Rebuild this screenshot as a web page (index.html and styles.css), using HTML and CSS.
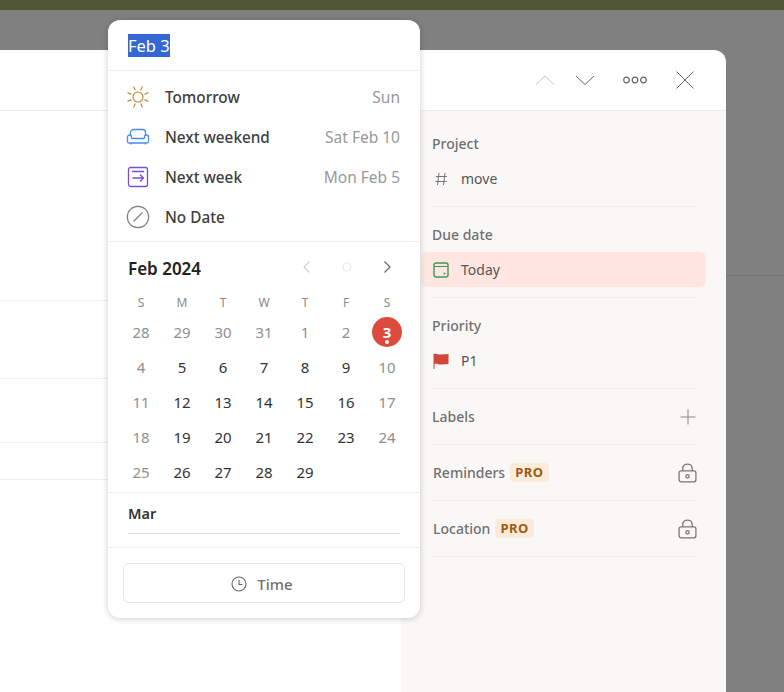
FILE: index.html
```html
<!DOCTYPE html>
<html lang="en">
<head>
    <meta charset="UTF-8">
    <meta name="viewport" content="width=device-width, initial-scale=1.0">
    <title>Task</title>
    <link rel="stylesheet" href="styles.css">
</head>
<body>
<div class="topbar"></div>
<div class="backdrop">
    <div class="modal">
        <div class="modal-head">
            <svg class="head-icon" width="22" height="22" viewBox="0 0 22 22"><path d="M2 15.500 11 7l9 8.500" stroke="#c4c4c4"/></svg>
            <svg class="head-icon" width="22" height="22" viewBox="0 0 22 22"><path d="M2 7l9 8.500L20 7" stroke="#666"/></svg>
            <svg class="head-icon dots" width="26" height="22" viewBox="0 0 26 22"><g stroke="#666" stroke-width="1.200"><circle cx="4.500" cy="11" r="2.800"/><circle cx="13" cy="11" r="2.800"/><circle cx="21.500" cy="11" r="2.800"/></g></svg>
            <svg class="head-icon" width="22" height="22" viewBox="0 0 22 22"><path d="M2.500 2.500l17 17M19.500 2.500l-17 17" stroke="#666"/></svg>
        </div>
        <div class="modal-body">
            <div class="main-pane">
                <div class="main-row row-a"></div>
                <div class="main-row row-b"></div>
                <div class="main-row row-c"></div>
                <div class="main-row row-d"></div>
            </div>
            <div class="side-pane">
                <div class="section">
                    <div class="section-label">Project</div>
                    <div class="section-value">
                        <svg class="value-icon" width="16" height="16" viewBox="0 0 16 16"><path d="M6 2 4.500 14M12 2l-1.500 12M3 5.500h11M2.500 10.500h11" stroke="#777" fill="none"/></svg>
                        <span>move</span>
                    </div>
                </div>
                <div class="section">
                    <div class="section-label">Due date</div>
                    <div class="section-value value-due">
                        <svg class="value-icon" width="16" height="16" viewBox="0 0 16 16"><rect x="1" y="1" width="14" height="14" rx="2" fill="none" stroke="#3d9a50" stroke-width="1.400"/><path d="M1.500 4.500h13" stroke="#3d9a50"/><circle cx="11.500" cy="11.500" r="1" fill="#3d9a50"/></svg>
                        <span>Today</span>
                    </div>
                </div>
                <div class="section">
                    <div class="section-label">Priority</div>
                    <div class="section-value">
                        <svg class="value-icon" width="16" height="16" viewBox="0 0 16 16"><path d="M0.500 1c3-1 5 .8 8 .5 2.500-.2 4.500-.5 7-.5v10c-2.500 0-4.500 .3-7 .5-3 .2-5-1.300-7-.5V16H.5z" fill="#d1453b"/></svg>
                        <span>P1</span>
                    </div>
                </div>
                <div class="section section-small">
                    <span class="section-label">Labels</span>
                    <svg class="end-icon" width="16" height="16" viewBox="0 0 16 16"><path d="M8 .5v15M.5 8h15" stroke="#888" fill="none"/></svg>
                </div>
                <div class="section section-small">
                    <span class="section-label label-pro">Reminders</span><span class="pro">PRO</span>
                    <svg class="end-icon lock" width="19" height="20" viewBox="0 0 18 19"><g fill="none" stroke="#777" stroke-width="1.200"><rect x="1" y="7.500" width="16" height="10.500" rx="2"/><path d="M4.500 7.500V5a4.500 4 0 0 1 9 0v2.500"/><circle cx="9" cy="12.700" r="1.600"/></g></svg>
                </div>
                <div class="section section-small">
                    <span class="section-label label-pro">Location</span><span class="pro">PRO</span>
                    <svg class="end-icon lock" width="19" height="20" viewBox="0 0 18 19"><g fill="none" stroke="#777" stroke-width="1.200"><rect x="1" y="7.500" width="16" height="10.500" rx="2"/><path d="M4.500 7.500V5a4.500 4 0 0 1 9 0v2.500"/><circle cx="9" cy="12.700" r="1.600"/></g></svg>
                </div>
            </div>
        </div>
    </div>
    <div class="behind"></div>
</div>

<div class="popup">
    <div class="popup-input"><span class="selected">Feb 3</span></div>
    <div class="quick-list">
        <div class="quick-item">
            <svg width="24" height="24" viewBox="0 0 24 24"><g stroke="#c67f2b" stroke-width="1.100" fill="none" stroke-linecap="round"><circle cx="12" cy="12" r="5"/><path d="M9.130 5.070 7.800 1.840M14.870 5.070 16.200 1.840M9.130 18.930 7.800 22.160M14.870 18.930 16.200 22.160M5.070 9.130 1.840 7.800M5.070 14.870 1.840 16.200M18.930 9.130 22.160 7.800M18.930 14.870 22.160 16.200"/></g></svg>
            <span class="quick-name">Tomorrow</span><span class="quick-date">Sun</span>
        </div>
        <div class="quick-item">
            <svg width="24" height="24" viewBox="0 0 24 24"><g stroke="#4a8cf0" stroke-width="1.300" fill="none" stroke-linejoin="round"><path d="M4.500 10V7.500a3 3 0 0 1 3-3h9a3 3 0 0 1 3 3V10"/><path d="M5.500 13.500h13M5.500 13.500V12a2 2 0 0 0-4 0v4.500a1.500 1.500 0 0 0 1.500 1.500h18a1.500 1.500 0 0 0 1.500-1.500V12a2 2 0 0 0-4 0v1.500"/><path d="M5 18v1.500M19 18v1.500"/></g></svg>
            <span class="quick-name">Next weekend</span><span class="quick-date">Sat Feb 10</span>
        </div>
        <div class="quick-item">
            <svg width="24" height="24" viewBox="0 0 24 24"><g stroke="#7b4fd4" stroke-width="1.300" fill="none"><rect x="2.500" y="2.500" width="19" height="19" rx="2"/><path d="M6 6.500h12M6.500 13h11M14 9.500l3.500 3.500-3.500 3.500"/></g></svg>
            <span class="quick-name">Next week</span><span class="quick-date">Mon Feb 5</span>
        </div>
        <div class="quick-item">
            <svg width="24" height="24" viewBox="0 0 24 24"><g stroke="#808080" stroke-width="1.200" fill="none"><circle cx="12" cy="12" r="10.700"/><path d="M7.500 16.500l9-9"/></g></svg>
            <span class="quick-name">No Date</span>
        </div>
    </div>
    <div class="calendar">
        <div class="cal-head">
            <span class="cal-title">Feb 2024</span>
            <div class="cal-nav">
                <svg width="12" height="14" viewBox="0 0 12 14"><path d="M8.500 1.500 3 7l5.500 5.500" fill="none" stroke="#d0d0d0" stroke-width="1.200"/></svg>
                <svg width="12" height="14" viewBox="0 0 12 14"><circle cx="6" cy="7" r="4" fill="none" stroke="#e8e8e8" stroke-width="1.200"/></svg>
                <svg width="12" height="14" viewBox="0 0 12 14"><path d="M3.500 1.500 9 7l-5.500 5.500" fill="none" stroke="#666" stroke-width="1.200"/></svg>
            </div>
        </div>
        <div class="cal-grid" id="calGrid"></div>
    </div>
    <div class="next-month">
        <div class="next-title">Mar</div>
    </div>
    <div class="popup-foot">
        <div class="time-btn">
            <svg width="16" height="16" viewBox="0 0 16 16"><g fill="none" stroke="#666" stroke-width="1.100"><circle cx="8" cy="8" r="7"/><path d="M8 4v4.500h3.500"/></g></svg>
            <span>Time</span>
        </div>
    </div>
</div>

<script>
    const weekDays = ['S', 'M', 'T', 'W', 'T', 'F', 'S'];
    const days = [28, 29, 30, 31, 1, 2, 3, 4, 5, 6, 7, 8, 9, 10, 11, 12, 13, 14, 15, 16, 17, 18, 19, 20, 21, 22, 23, 24, 25, 26, 27, 28, 29];
    const calGrid = document.getElementById('calGrid');

    weekDays.forEach(d => {
        const cell = document.createElement('div');
        cell.className = 'week-day';
        cell.textContent = d;
        calGrid.appendChild(cell);
    });

    days.forEach((d, i) => {
        const cell = document.createElement('div');
        cell.className = 'day';
        // past days and weekends are greyed out
        if (i < 6 || i % 7 === 0 || i % 7 === 6) cell.classList.add('muted');
        if (i === 6) {
            cell.className = 'day today';
            const mark = document.createElement('span');
            mark.className = 'today-mark';
            mark.textContent = d;
            cell.appendChild(mark);
        } else {
            cell.textContent = d;
        }
        calGrid.appendChild(cell);
    });
</script>
</body>
</html>
```

FILE: styles.css
```css
* {
    box-sizing: border-box;
}
body {
    font-family: "Noto Sans", sans-serif;
    font-size: 14px;
    color: #333;
    margin: 0;
    height: 692px;
    overflow: hidden;
    background-color: #808080;
}
.topbar {
    height: 10px;
    background-color: #4f5733;
}
.backdrop {
    display: flex;
    padding-top: 40px;
    height: 682px;
}
.behind {
    flex: 1;
    height: 226px;
    border-bottom: 1px solid #747474;
}
.modal {
    width: 726px;
    height: 642px;
    background-color: #fff;
    border-top-right-radius: 12px;
    display: flex;
    flex-direction: column;
    overflow: hidden;
}
.modal-head {
    height: 61px;
    flex: none;
    border-bottom: 1px solid #ececec;
    display: flex;
    align-items: center;
    justify-content: flex-end;
    gap: 18px;
    padding-right: 30px;
}
.head-icon path, .head-icon circle {
    fill: none;
}
.dots {
    margin-left: 8px;
    margin-right: 8px;
}
.modal-body {
    flex: 1;
    display: flex;
}
.main-pane {
    width: 401px;
}
.main-row {
    border-bottom: 1px solid #eee;
}
.row-a {
    height: 190px;
}
.row-b {
    height: 78px;
}
.row-c {
    height: 64px;
}
.row-d {
    height: 37px;
}
.side-pane {
    width: 325px;
    background-color: #faf8f6;
    padding: 5px 30px 0 30px;
}
.section {
    height: 91px;
    border-bottom: 1px solid #eee;
    padding-top: 15px;
}
.section-label {
    font-size: 14px;
    font-weight: 500;
    color: #707070;
    line-height: 26px;
    padding-left: 1px;
}
.section-value {
    display: flex;
    align-items: center;
    height: 35px;
    margin-top: 4px;
    color: #555;
    font-size: 14px;
    margin-left: -10px;
    margin-right: -10px;
    padding-left: 12px;
    border-radius: 6px;
    gap: 12px;
}
.value-due {
    background-color: #ffe6e2;
}
.section-small {
    height: 56px;
    display: flex;
    align-items: center;
    padding-top: 0;
}
.section-small .section-label {
    line-height: 20px;
}
.section-small .label-pro {
    padding-left: 2px;
}
.pro {
    background-color: #faecd9;
    color: #a05a16;
    font-size: 13px;
    font-weight: 700;
    letter-spacing: 0.5px;
    padding: 0 5px;
    border-radius: 4px;
    margin-left: 5px;
    line-height: 19px;
}
.end-icon {
    margin-left: auto;
}
.lock {
    margin-right: -1px;
}

.popup {
    position: absolute;
    left: 108px;
    top: 20px;
    width: 312px;
    height: 598px;
    background-color: #fff;
    border-radius: 12px;
    box-shadow: 0 1px 6px rgba(0, 0, 0, 0.2);
}
.popup-input {
    height: 51px;
    border-bottom: 1px solid #eee;
    padding: 14px 0 0 20px;
    font-size: 16.500px;
    line-height: 23px;
    color: #fff;
}
.selected {
    display: inline-block;
    background-color: #3367d1;
}
.quick-list {
    padding: 6px 0 4px 0;
    border-bottom: 1px solid #eee;
    height: 171px;
    font-size: 15.300px;
}
.quick-item {
    height: 40px;
    display: flex;
    align-items: center;
    padding: 0 20px 0 18px;
}
.quick-name {
    margin-left: 15px;
    font-weight: 500;
    color: #404040;
}
.quick-date {
    margin-left: auto;
    color: #999;
    font-size: 15.500px;
}
.calendar {
    height: 251px;
    border-bottom: 1px solid #eee;
    padding: 0 15px;
}
.cal-head {
    height: 49px;
    display: flex;
    align-items: center;
    padding: 3px 12px 0 5px;
}
.cal-title {
    font-size: 17px;
    font-weight: 600;
    color: #222;
}
.cal-nav {
    margin-left: auto;
    display: flex;
    gap: 28px;
    margin-top: -2px;
}
.cal-grid {
    display: grid;
    grid-template-columns: repeat(7, 41px);
    grid-template-rows: 25px repeat(5, 35px);
    justify-content: center;
}
.week-day {
    text-align: center;
    font-size: 12px;
    line-height: 24px;
    color: #8a8a8a;
}
.day {
    display: flex;
    align-items: center;
    justify-content: center;
    color: #333;
    font-size: 15px;
    padding-bottom: 4px;
}
.muted {
    color: #8f8f8f;
}
.today {
    padding-bottom: 3px;
}
.today-mark {
    width: 30px;
    height: 30px;
    border-radius: 50%;
    background-color: #dc4c3e;
    color: #fff;
    font-weight: 700;
    display: flex;
    align-items: center;
    justify-content: center;
    position: relative;
}
.today-mark::after {
    content: "";
    position: absolute;
    left: 13px;
    bottom: 3px;
    width: 4px;
    height: 4px;
    border-radius: 50%;
    background-color: #fff;
}
.next-month {
    height: 55px;
    border-bottom: 1px solid #eee;
    padding: 0 20px;
}
.next-title {
    height: 41px;
    padding-top: 10px;
    line-height: 20px;
    font-size: 14.500px;
    font-weight: 600;
    color: #333;
    border-bottom: 1px solid #ddd;
}
.popup-foot {
    padding: 15px;
}
.time-btn {
    height: 40px;
    border: 1px solid #e5e5e5;
    border-radius: 6px;
    display: flex;
    align-items: center;
    justify-content: center;
    gap: 10px;
    padding: 1px 4px 0 0;
    color: #707070;
    font-size: 15px;
    font-weight: 500;
}
```
